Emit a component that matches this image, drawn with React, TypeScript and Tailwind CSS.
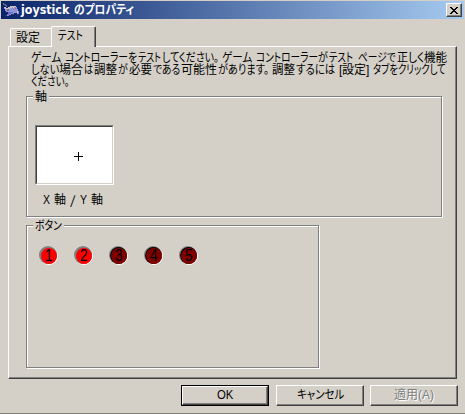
import { useLayoutEffect, useRef, useState } from 'react';
import type { ReactNode } from 'react';
import { clsx } from 'clsx';

type Run = [text: string, width: number, gap?: number];

function Fit({ text, width, gap = 0, className }: { text: string; width: number; gap?: number; className?: string }) {
  const ref = useRef<HTMLSpanElement>(null);
  const [scale, setScale] = useState(1);

  useLayoutEffect(() => {
    if (ref.current) {
      setScale(width / ref.current.offsetWidth);
    }
  }, [text, width]);

  return (
    <span className={clsx('block shrink-0', className)} style={{ width, marginRight: gap }}>
      <span
        ref={ref}
        className="inline-block origin-left align-top whitespace-pre [font-feature-settings:'palt']"
        style={{ transform: `scaleX(${scale})` }}
      >
        {text}
      </span>
    </span>
  );
}

const helpLines: Run[][] = [
  [
    ['ゲーム', 30, 4],
    ['コントローラー', 63],
    ['を', 9, 1],
    ['テスト', 23, 1],
    ['してください。', 57, 3],
    ['ゲーム', 30, 4],
    ['コントローラー', 62],
    ['が', 10, 1],
    ['テスト', 24, 5],
    ['ページで', 38, 1],
    ['正', 11],
    ['しく', 16],
    ['機能', 23],
  ],
  [
    ['しない', 28],
    ['場合', 24, 1],
    ['は', 9, 1],
    ['調整', 23, 1],
    ['が', 10, 1],
    ['必要', 23, 1],
    ['である', 27, 1],
    ['可能性', 36, 1],
    ['があります。', 51, 3],
    ['調整', 23, 1],
    ['するには', 39, 4],
    ['[', 3],
    ['設定', 24],
    [']', 3, 4],
    ['タブをクリックして', 73],
  ],
  [['ください。', 38]],
];

const buttons = [
  { id: 1, pressed: true },
  { id: 2, pressed: true },
  { id: 3, pressed: false },
  { id: 4, pressed: false },
  { id: 5, pressed: false },
];

function GamepadIcon() {
  return (
    <svg width="16" height="16" viewBox="0 0 16 16" className="shrink-0" shapeRendering="crispEdges">
      <path d="M0 1h1v1h2v1h1v2H3V4H2V3H0z" fill="#6c6c74" />
      <path d="M1 5h2v1h2V5h2V4h6v1h1v2h1v2h1v3h-2v-1h-3v1H8v1H6v1H3v-1h1v-1h1v-2H3V9H2V7H1z" fill="#8f95dc" />
      <path d="M1 5h2v1h2V5h2V4h6v1H9v1H7v1H2V6H1z" fill="#cdbfc9" />
      <path d="M5 10h5v1H8v1H6v1H4v-1h1z" fill="#686bc4" />
      <path d="M4 7h2v2H4z" fill="#6f6f78" />
      <path d="M10 5h1v1h-1z" fill="#f0dc50" />
      <path d="M12 6h1v1h-1z" fill="#e04848" />
      <path d="M10 7h1v1h-1z" fill="#40a070" />
      <path d="M14 9h1v2h-1z" fill="#cdbfc9" />
      <path d="M2 13h2v1H2zM7 13h1v1H7zM9 12h2v1H9zM14 12h2v1h-2z" fill="#34366f" />
    </svg>
  );
}

function GroupBox({ legend, legendWidth, className, children }: { legend: string; legendWidth: number; className?: string; children: ReactNode }) {
  return (
    <fieldset className={clsx('border border-[#808080] shadow-[1px_1px_0_#fff,inset_1px_1px_0_#fff]', className)}>
      <div className="-mt-[6px] ml-[6px] flex h-3 w-fit bg-[#d4d0c8] pr-[2px] pl-[2px]">
        <Fit text={legend} width={legendWidth} />
      </div>
      {children}
    </fieldset>
  );
}

function Lamp({ id, pressed }: { id: number; pressed: boolean }) {
  return (
    <div className="grid h-[19px] w-[19px] place-items-center">
      <svg width="19" height="19" viewBox="0 0 19 19" className="col-start-1 row-start-1">
        <circle cx="10" cy="10" r="9" fill="#fff" />
        <circle cx="9" cy="9" r="9" fill="#808080" />
        <circle cx="9.5" cy="9.5" r="8.4" fill={pressed ? '#808080' : '#000'} />
        <circle cx="10" cy="10" r="8" fill={pressed ? '#ff0000' : '#800000'} />
      </svg>
      <span className="col-start-1 row-start-1 scale-x-80 pt-px font-['Liberation_Sans',sans-serif] text-[17px] leading-[18px] text-black">
        {id}
      </span>
    </div>
  );
}

const raised =
  'border border-t-white border-l-white border-r-[#404040] border-b-[#404040] shadow-[inset_-1px_-1px_0_#808080]';

function DialogButton({ label, width, isDefault, disabled }: { label: string; width: number; isDefault?: boolean; disabled?: boolean }) {
  return (
    <button className={clsx('h-[21px] w-[88px]', isDefault && 'border border-black')} disabled={disabled}>
      <span
        className={clsx(
          'flex h-full w-full items-center justify-center',
          raised,
          disabled && 'text-[#808080] [text-shadow:1px_1px_0_#fff]'
        )}
      >
        <Fit text={label} width={width} className="h-[13px]" />
      </span>
    </button>
  );
}

export default function App() {
  return (
    <div className="flex h-[414px] w-[465px] flex-col overflow-hidden border-b border-[#808080] bg-[#d4d0c8] px-px pt-px font-['Liberation_Sans','Noto_Sans_CJK_JP',sans-serif] text-[12px] leading-3 text-black">
      <header className="flex h-[18px] shrink-0 items-center bg-linear-to-r/srgb from-[#0a246a] to-[#a6caf0] pr-[2px] pl-[2px] font-bold text-white">
        <GamepadIcon />
        <div className="ml-[2px] flex flex-1">
          <Fit text="joystick" width={48} gap={5} className="font-['DejaVu_Sans',sans-serif]" />
          <Fit text="のプロパティ" width={60} />
        </div>
        <button className={clsx('flex h-[14px] w-4 items-center justify-center bg-[#d4d0c8]', raised)}>
          <svg width="8" height="7" viewBox="0 0 8 7" shapeRendering="crispEdges">
            <path
              d="M0 0h2v1h1v1h2V1h1V0h2v1H7v1H6v1H5v1h1v1h1v1h1v1H6V6H5V5H3v1H2v1H0V6h1V5h1V4h1V3H2V2H1V1H0z"
              fill="#000"
            />
          </svg>
        </button>
      </header>

      <nav className="flex h-[27px] shrink-0 items-end pl-[9px]">
        <div className="flex h-[18px] w-[41px] rounded-tl-[2px] border-t border-l border-white pt-[3px] pl-[5px]">
          <Fit text="設定" width={24} />
        </div>
        <div className="relative -mb-px flex h-[21px] w-[45px] rounded-t-[2px] border-t border-r border-l border-white border-r-[#404040] bg-[#d4d0c8] pt-[3px] pl-[6px] shadow-[inset_-1px_0_0_#808080]">
          <Fit text="テスト" width={25} />
        </div>
      </nav>

      <main className={clsx('ml-[7px] h-[333px] w-[449px] shrink-0 pt-[5px] pl-[17px]', raised)}>
        <div className="pl-[5px]">
          {helpLines.map((line, i) => (
            <p key={i} className="flex h-3">
              {line.map(([text, width, gap], j) => (
                <Fit key={j} text={text} width={width} gap={gap} />
              ))}
            </p>
          ))}
        </div>

        <GroupBox legend="軸" legendWidth={12} className="mt-[8px] h-[121px] w-[416px]">
          <div className="mt-[22px] ml-2 flex h-[60px] w-[79px] border border-t-[#808080] border-r-white border-b-white border-l-[#808080]">
            <div className="h-full w-full border border-t-[#404040] border-r-[#d4d0c8] border-b-[#d4d0c8] border-l-[#404040] bg-white pt-[25px] pl-[37px]">
              <svg width="9" height="9" viewBox="0 0 9 9" shapeRendering="crispEdges">
                <path d="M4 0h1v4h4v1H5v4H4V5H0V4h4z" />
              </svg>
            </div>
          </div>
          <div className="mt-[9px] flex pl-[16px]">
            <Fit text="X" width={7} gap={4} />
            <Fit text="軸" width={12} gap={4} />
            <Fit text="/" width={6} gap={4} className="font-['Noto_Sans_CJK_JP',sans-serif]" />
            <Fit text="Y" width={7} gap={4} />
            <Fit text="軸" width={12} />
          </div>
        </GroupBox>

        <GroupBox legend="ボタン" legendWidth={27} className="mt-2 h-[143px] w-[293px]">
          <div className="mt-[14px] ml-3 flex gap-4">
            {buttons.map((button) => (
              <Lamp key={button.id} {...button} />
            ))}
          </div>
        </GroupBox>
      </main>

      <footer className="mt-[6px] flex pl-[180px]">
        <DialogButton label="OK" width={16} isDefault />
        <div className="ml-[7px] flex gap-[6px]">
          <DialogButton label="キャンセル" width={47} />
          <DialogButton label="適用(A)" width={40} disabled />
        </div>
      </footer>
    </div>
  );
}
